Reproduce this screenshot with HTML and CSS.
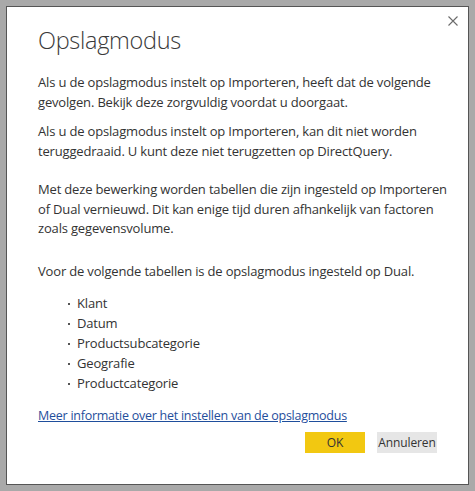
FILE: index.html
```html
<!DOCTYPE html>
<html lang="nl">
<head>
<meta charset="utf-8">
<title>Opslagmodus</title>
<link rel="stylesheet" href="styles.css">
</head>
<body>
<div class="dialog">
  <button class="close" aria-label="Sluiten">
    <svg width="10" height="10" viewBox="0 0 10 10"><path d="M0.5 0.5 L9.5 9.5 M9.5 0.5 L0.5 9.5" stroke="#6b6b6b" stroke-width="1.1" fill="none"/></svg>
  </button>
  <h1 class="title">Opslagmodus</h1>
  <p class="p1">Als u de opslagmodus instelt op Importeren, heeft dat de volgende<br>gevolgen. Bekijk deze zorgvuldig voordat u doorgaat.</p>
  <p class="p2">Als u de opslagmodus instelt op Importeren, kan dit niet worden<br>teruggedraaid. U kunt deze niet terugzetten op DirectQuery.</p>
  <p class="p3">Met deze bewerking worden tabellen die zijn ingesteld op Importeren<br>of Dual vernieuwd. Dit kan enige tijd duren afhankelijk van factoren<br>zoals gegevensvolume.</p>
  <p class="p4">Voor de volgende tabellen is de opslagmodus ingesteld op Dual.</p>
  <ul class="tables">
    <li>Klant</li>
    <li>Datum</li>
    <li>Productsubcategorie</li>
    <li>Geografie</li>
    <li>Productcategorie</li>
  </ul>
  <a class="link" href="#">Meer informatie over het instellen van de opslagmodus</a>
  <div class="actions">
    <button class="btn btn-primary">OK</button>
    <button class="btn btn-secondary">Annuleren</button>
  </div>
</div>
</body>
</html>
```
FILE: styles.css
```css
html, body {
  margin: 0;
  padding: 0;
}
body {
  background: #a9a9a9;
  width: 475px;
  height: 491px;
  overflow: hidden;
  font-family: "Open Sans", "Noto Sans", sans-serif;
  color: #333333;
}
.dialog {
  position: relative;
  box-sizing: border-box;
  margin: 6px 0 0 6px;
  width: 463px;
  height: 479px;
  border: 1px solid #555555;
  background: #ffffff;
  padding: 17px 31px 0 31px;
  display: flex;
  flex-direction: column;
  align-items: flex-start;
  letter-spacing: -0.17px;
}
.close {
  position: absolute;
  top: 9px;
  right: 10px;
  width: 10px;
  height: 10px;
  padding: 0;
  border: 0;
  background: transparent;
  display: flex;
}
.title {
  margin: 0;
  font-size: 23.5px;
  font-weight: 300;
  line-height: 32px;
  color: #3a3a3a;
  letter-spacing: -0.3px;
}
p {
  margin: 0;
  font-size: 13px;
  line-height: 20px;
  white-space: nowrap;
}
.p1 { margin-top: 16px; }
.p2 { margin-top: 9px; }
.p3 { margin-top: 19px; line-height: 19.5px; }
.p4 { margin-top: 22px; }
.tables {
  margin: 12px 0 0 0;
  padding: 0 0 0 39px;
  list-style: none;
  font-size: 13px;
  line-height: 20px;
}
.tables li {
  position: relative;
}
.tables li::before {
  content: "";
  position: absolute;
  left: -9px;
  top: 10px;
  width: 2px;
  height: 2px;
  background: #555;
}
.link {
  margin-top: 13px;
  font-size: 12.5px;
  line-height: 20px;
  color: #1f4e9c;
  text-decoration: underline;
  letter-spacing: -0.25px;
}
.actions {
  align-self: stretch;
  display: flex;
  justify-content: flex-end;
  gap: 12px;
  margin-top: 6px;
}
.btn {
  width: 60px;
  height: 21px;
  border: 0;
  padding: 0;
  font-family: "Open Sans", "Noto Sans", sans-serif;
  font-size: 12px;
  letter-spacing: -0.1px;
  color: #333333;
}
.btn-primary { background: #f2c811; }
.btn-secondary { background: #e6e6e6; }
```
